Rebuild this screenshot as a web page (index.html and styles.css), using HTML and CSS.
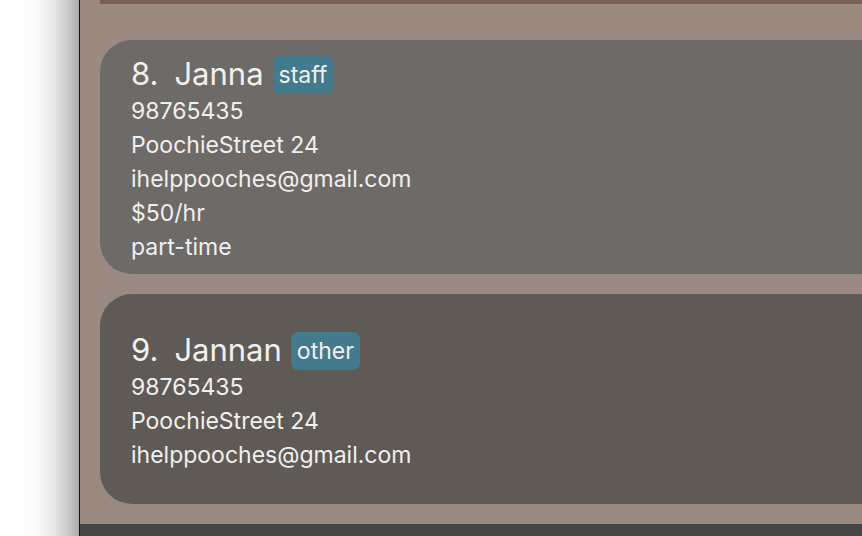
FILE: index.html
```html
<!DOCTYPE html>
<html>
<head>
<meta charset="utf-8">
<link rel="stylesheet" href="styles.css">
</head>
<body>
<div class="screen">
  <div class="shadow-side"></div>
  <div class="divider"></div>
  <main class="panel">
    <div class="list">
      <div class="top-bar"></div>
      <section class="card card-light">
        <div class="name-row">
          <span class="index">8.</span>
          <span class="name">Janna</span>
          <span class="tag">staff</span>
        </div>
        <div class="line">98765435</div>
        <div class="line">PoochieStreet 24</div>
        <div class="line">ihelppooches@gmail.com</div>
        <div class="line">$50/hr</div>
        <div class="line">part-time</div>
      </section>
      <section class="card card-dark">
        <div class="name-row">
          <span class="index">9.</span>
          <span class="name">Jannan</span>
          <span class="tag">other</span>
        </div>
        <div class="line">98765435</div>
        <div class="line">PoochieStreet 24</div>
        <div class="line">ihelppooches@gmail.com</div>
      </section>
    </div>
    <div class="status-bar"></div>
  </main>
</div>
</body>
</html>
```

FILE: styles.css
```css
html, body {
  margin: 0;
  padding: 0;
  width: 862px;
  height: 536px;
  overflow: hidden;
}

body {
  font-family: Inter, "Noto Sans", sans-serif;
  color: #f2f0ee;
}

.screen {
  display: flex;
  height: 536px;
}

.shadow-side {
  width: 79px;
  flex: none;
  background: linear-gradient(to right, #ffffff 0px, #fbfbfb 35px, #e6e6e6 55px, #c4c4c4 70px, #a9a9a9 79px);
}

.divider {
  width: 1px;
  flex: none;
  background: #111111;
}

.panel {
  flex: 1;
  display: flex;
  flex-direction: column;
  background: #9a8a81;
  overflow: hidden;
}

.list {
  flex: 1;
  display: flex;
  flex-direction: column;
  gap: 20px;
  padding-left: 20px;
}

.top-bar {
  height: 4px;
  background: #7a5f54;
  margin-right: -40px;
  margin-bottom: 16px;
}

.card {
  border-radius: 32px;
  margin-right: -60px;
  padding-left: 31px;
  display: flex;
  flex-direction: column;
}

.card-light {
  background: #6e6a67;
  padding-top: 16px;
  padding-bottom: 10px;
}

.card-dark {
  background: #5f5a56;
  padding-top: 38px;
  padding-bottom: 32px;
}

.name-row {
  display: flex;
  align-items: center;
  height: 38px;
  font-size: 31px;
}

.index {
  margin-right: 16px;
  padding-bottom: 4px;
}

.name {
  margin-right: 9px;
  padding-bottom: 4px;
}

.tag {
  background: #437a8d;
  border-radius: 7px;
  font-size: 23px;
  height: 38px;
  line-height: 38px;
  padding: 0 6px;
  box-sizing: border-box;
}

.line {
  font-size: 23px;
  height: 34px;
  line-height: 34px;
}

.status-bar {
  height: 12px;
  background: #464646;
  flex: none;
}
```
